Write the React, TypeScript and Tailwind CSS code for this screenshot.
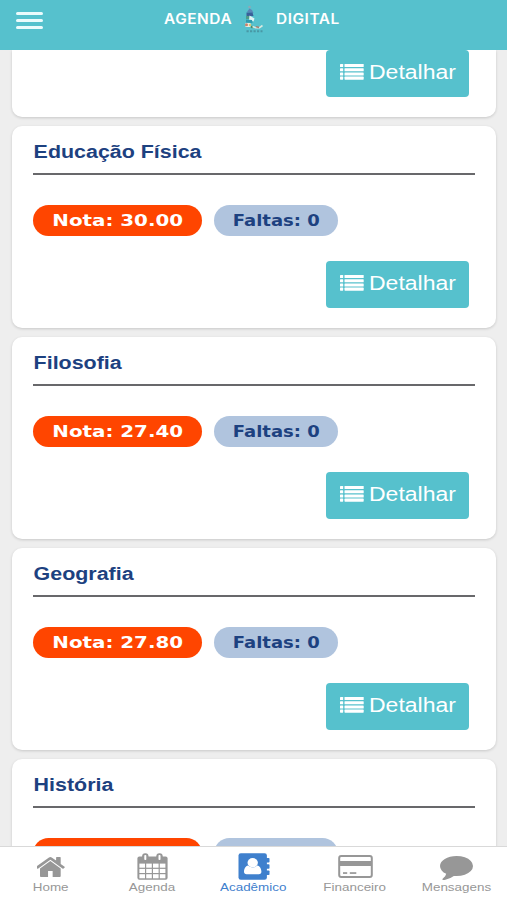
import { ReactNode } from "react";

type Subject = {
  name: string;
  nota: string;
  faltas: number;
};

const subjects: Subject[] = [
  { name: "Educação Física", nota: "30.00", faltas: 0 },
  { name: "Filosofia", nota: "27.40", faltas: 0 },
  { name: "Geografia", nota: "27.80", faltas: 0 },
  { name: "História", nota: "28.10", faltas: 0 },
];

function ListIcon() {
  return (
    <svg
      className="h-4 w-[24px] shrink-0"
      viewBox="0 0 24 16"
      fill="currentColor"
    >
      {[0, 4.2, 8.4, 12.6].map((y) => (
        <g key={y}>
          <rect x="0" y={y} width="3.2" height="3.1" rx="0.6" />
          <rect x="4.5" y={y} width="19.2" height="3.1" rx="0.6" />
        </g>
      ))}
    </svg>
  );
}

function HomeIcon() {
  return (
    <svg
      className="h-5 w-[29px]"
      viewBox="88 253 1616 1283"
      preserveAspectRatio="none"
      fill="currentColor"
    >
      <path d="M1408 992v480q0 26-19 45t-45 19h-384v-384h-256v384h-384q-26 0-45-19t-19-45v-480q0-1 .5-3t.5-3l575-474 575 474q1 2 1 6zm223-69l-62 74q-8 9-21 11h-3q-13 0-21-7l-692-577-692 577q-12 8-24 7-13-2-21-11l-62-74q-8-10-7-23.5t11-21.5l719-599q32-26 76-26t76 26l244 204v-195q0-14 9-23t23-9h192q14 0 23 9t9 23v408l219 182q10 8 11 21.5t-7 23.5z" />
    </svg>
  );
}

function CalendarIcon() {
  return (
    <svg className="h-[27px] w-[31px]" viewBox="0 0 31 27" fill="none">
      <rect x="0.4" y="3.6" width="30.2" height="23.2" rx="2" fill="currentColor" />
      <rect x="5.1" y="0.2" width="6.4" height="8.2" rx="3" fill="currentColor" />
      <rect x="19.3" y="0.2" width="6.4" height="8.2" rx="3" fill="currentColor" />
      <rect x="7.3" y="1.9" width="2" height="5.2" rx="0.8" fill="#fff" />
      <rect x="21.5" y="1.9" width="2" height="5.2" rx="0.8" fill="#fff" />
      {[10.6, 15.9, 21.2].map((y) =>
        [2.4, 9.2, 16, 22.8].map((x) => (
          <rect key={`${x}-${y}`} x={x} y={y} width="5.6" height="4.1" fill="#fff" />
        ))
      )}
    </svg>
  );
}

function AddressBookIcon() {
  return (
    <svg className="h-[27px] w-[32px]" viewBox="0 0 32 27" fill="currentColor">
      <rect x="0.5" y="0.3" width="28.4" height="26.4" rx="2.3" />
      <rect x="27" y="5" width="4.5" height="4.6" rx="0.8" />
      <rect x="27" y="11.2" width="4.5" height="4.6" rx="0.8" />
      <rect x="27" y="17.4" width="4.5" height="4.6" rx="0.8" />
      <ellipse cx="14.7" cy="9.8" rx="5.2" ry="4.7" fill="#fff" />
      <path
        d="M10.1 12.6C7.4 13 6 16.2 6 18.8c0 1.5.9 2.5 2.6 2.5h12.2c1.7 0 2.6-1 2.6-2.5 0-2.6-1.4-5.8-4.1-6.2-2.6 2.4-6.6 2.4-9.2 0z"
        fill="#fff"
      />
    </svg>
  );
}

function CardIcon() {
  return (
    <svg className="h-[23px] w-[35px]" viewBox="0 0 35 23" fill="currentColor">
      <rect
        x="1.2"
        y="1.1"
        width="32.6"
        height="20.8"
        rx="2"
        fill="none"
        stroke="currentColor"
        strokeWidth="2"
      />
      <rect x="1.2" y="6" width="32.6" height="5" />
      <rect x="5" y="17.2" width="4.2" height="1.7" />
      <rect x="11.8" y="17.2" width="6.5" height="1.7" />
    </svg>
  );
}

function CommentIcon() {
  return (
    <svg
      className="h-[24px] w-[33px]"
      viewBox="0 256 1792 1536"
      preserveAspectRatio="none"
      fill="currentColor"
    >
      <path d="M1792 896q0 174-120 321.5t-326 233-450 85.5q-70 0-145-8-198 175-460 242-49 14-114 22-17 2-30.5-9t-17.5-29v-1q-3-4-.5-12t2-10 4.5-9.5l6-9 7-8.5 8-9q7-8 31-34.5t34.5-38 31-39.5 32.5-51 27-59 26-76q-157-89-247.5-220t-90.5-281q0-130 71-248.5t191-204.5 286-136.5 348-50.5q244 0 450 85.5t326 233 120 321.5z" />
    </svg>
  );
}

function Logo() {
  return (
    <svg className="h-[28px] w-[20px]" viewBox="0 0 20 28" fill="none">
      <circle cx="5.5" cy="2" r="1.3" fill="#8fa9b5" />
      <path d="M3 7l2.5-3.500L8 5l1.500 3z" fill="#5a86b8" />
      <path d="M2.500 7.500h6l1 3.500h-7z" fill="#3a5f99" />
      <path d="M2 11h4v3H2z" fill="#4c9d8a" />
      <path d="M5.500 10.500l5 3-1 3-4.500-1.500z" fill="#dff3f4" />
      <path d="M2 14.500l6 .5.500 3-6.500-.5z" fill="#2f9bb0" />
      <rect x="1.500" y="18" width="5" height="4" fill="#e4efe9" />
      <circle cx="2.500" cy="19.800" r="1.500" fill="#c9806a" />
      <circle cx="6" cy="20" r="1.300" fill="#d9c979" />
      <circle cx="8" cy="22" r="1.300" fill="#4a8a68" />
      <path d="M8.500 21.500l3 1.200h4l3-2.200" stroke="#d9e8df" strokeWidth="1.600" />
      <path d="M12 21.700l3 .8" stroke="#a97a6c" strokeWidth="1.300" />
      <path d="M2.500 26.300h16" stroke="#4898a5" strokeWidth="2" strokeDasharray="2.200 1.300" />
    </svg>
  );
}

function DetailButton() {
  return (
    <button className="flex h-[47px] w-[143px] shrink-0 items-center rounded-[4px] bg-[#56c1cd] pb-[3px] pl-[14px] text-white">
      <ListIcon />
      <span className="ml-[5px] origin-left scale-x-[1.15] text-[20px] leading-none">
        Detalhar
      </span>
    </button>
  );
}

function SubjectCard({ subject }: { subject: Subject }) {
  return (
    <div className="h-[202px] shrink-0 rounded-[10px] bg-white px-[21px] pt-[14px] shadow-[0_1px_3px_rgba(0,0,0,0.16)]">
      <div className="h-[35px] border-b-2 border-[#68686b]">
        <h2 className="inline-block origin-left scale-x-[1.19] pl-[0.5px] text-[18px] leading-[24px] font-bold text-[#1d4180]">
          {subject.name}
        </h2>
      </div>
      <div className="mt-[30px] flex gap-3">
        <div className="flex h-[31px] w-[169px] items-center justify-center rounded-full bg-[#ff4500] font-['DejaVu_Sans'] text-white">
          <span className="scale-x-[1.24] text-[16px] leading-none font-bold whitespace-nowrap">
            Nota: {subject.nota}
          </span>
        </div>
        <div className="flex h-[31px] w-[124px] items-center justify-center rounded-full bg-[#b0c4de] pt-px pl-px font-['DejaVu_Sans'] text-[#1d4180]">
          <span className="scale-x-[1.2] text-[15px] leading-none font-bold whitespace-nowrap">
            Faltas: {subject.faltas}
          </span>
        </div>
      </div>
      <div className="mt-[25px] mr-[6px] flex justify-end">
        <DetailButton />
      </div>
    </div>
  );
}

function Tab({
  label,
  active,
  children,
}: {
  label: string;
  active?: boolean;
  children: ReactNode;
}) {
  return (
    <div
      className={
        active
          ? "flex flex-1 flex-col items-center text-[#3f80cd]"
          : "flex flex-1 flex-col items-center text-[#979797]"
      }
    >
      <div className="flex h-[33px] items-end justify-center">{children}</div>
      <span className="scale-x-[1.22] text-[11px] leading-[14px]">{label}</span>
    </div>
  );
}

export default function App() {
  return (
    <div className="flex h-[900px] w-[507px] flex-col overflow-hidden bg-[#eeeeee] font-['Liberation_Sans',sans-serif]">
      <header className="relative z-10 flex h-[50px] shrink-0 items-start bg-[#56c1cd] text-white">
        <div className="mt-[12px] ml-4 flex w-[148px] flex-col gap-[4px]">
          <span className="h-[3px] w-[27px] rounded-full bg-[#ecfbfc]"></span>
          <span className="h-[3px] w-[27px] rounded-full bg-[#ecfbfc]"></span>
          <span className="h-[3px] w-[27px] rounded-full bg-[#ecfbfc]"></span>
        </div>
        <div className="mt-[5px] flex h-7 items-center font-['Inter'] text-[14px] font-semibold tracking-[0.5px]">
          <span className="mb-[2px] w-[80px] origin-left scale-x-[1.1]">AGENDA</span>
          <Logo />
          <span className="mb-[2px] ml-[12px] origin-left scale-x-[1.1]">DIGITAL</span>
        </div>
      </header>

      <main className="flex min-h-0 flex-1 flex-col gap-[9px] overflow-hidden pr-[11px] pl-[12px]">
        <div className="flex h-[67px] shrink-0 items-start justify-end rounded-b-[10px] bg-white pr-[27px] shadow-[0_1px_3px_rgba(0,0,0,0.16)]">
          <DetailButton />
        </div>
        {subjects.map((subject) => (
          <SubjectCard key={subject.name} subject={subject} />
        ))}
      </main>

      <nav className="relative z-10 flex h-[54px] shrink-0 border-t border-[#d9d9d9] bg-white">
        <Tab label="Home">
          <div className="pb-[3px] pl-px">
            <HomeIcon />
          </div>
        </Tab>
        <Tab label="Agenda">
          <CalendarIcon />
        </Tab>
        <Tab label="Acadêmico" active>
          <AddressBookIcon />
        </Tab>
        <Tab label="Financeiro">
          <div className="pb-[2px] pl-px">
            <CardIcon />
          </div>
        </Tab>
        <Tab label="Mensagens">
          <CommentIcon />
        </Tab>
      </nav>
    </div>
  );
}
